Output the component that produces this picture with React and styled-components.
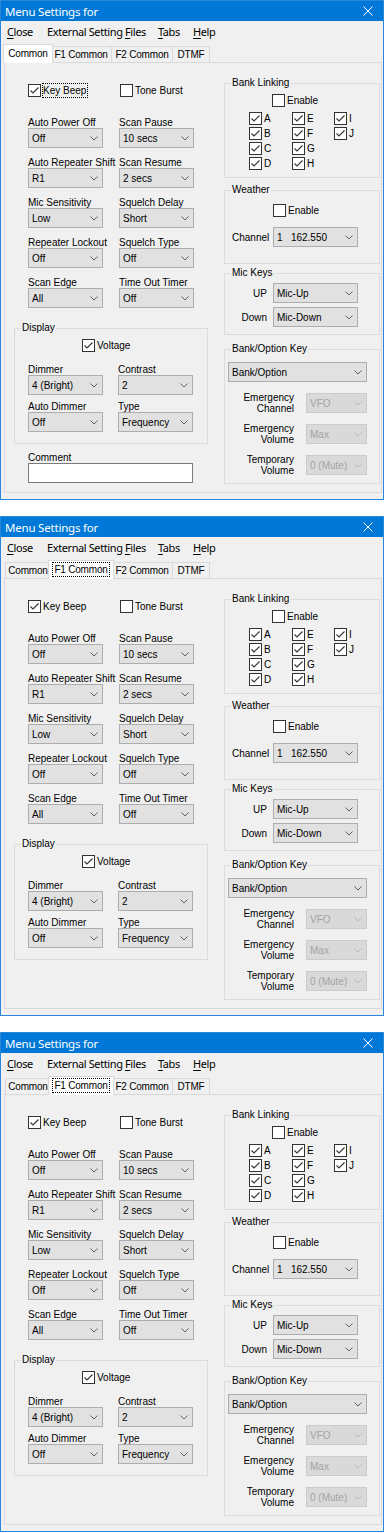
import React from 'react';
import styled, { createGlobalStyle } from 'styled-components';

const WIN_FONT = `"Liberation Sans", Arial, sans-serif`;
const UI_FONT = `"Noto Sans", "Liberation Sans", sans-serif`;

const GlobalStyle = createGlobalStyle`
  html, body { margin: 0; padding: 0; background: #ffffff; }
  body { width: 384px; }
  * { box-sizing: border-box; }
`;

const Stack = styled.div`
  display: flex;
  flex-direction: column;
  gap: 16px;
  width: 384px;
`;

const Frame = styled.div`
  width: 384px;
  height: 500px;
  background: #f0f0f0;
  border: 1px solid #2a87d9;
  display: flex;
  flex-direction: column;
  font-family: ${WIN_FONT};
  font-size: 10px;
  color: #000;
`;

const TitleBar = styled.div`
  height: 20px;
  flex: none;
  background: #0078d7;
  color: #fff;
  display: flex;
  align-items: center;
  justify-content: space-between;
  padding: 0 10px 0 4px;
  font-family: ${UI_FONT};
  font-size: 11.5px;
  letter-spacing: -0.2px;
`;

const MenuBar = styled.div`
  height: 21px;
  flex: none;
  display: flex;
  align-items: center;
  padding-left: 6px;
  font-family: ${UI_FONT};
  font-size: 11px;
  letter-spacing: -0.4px;
`;

const MenuItem = styled.span`
  width: ${(p) => p.$w}px;
  white-space: nowrap;
  line-height: 14px;
  u { text-decoration-thickness: 1px; text-underline-offset: 2px; }
`;

const TabStrip = styled.div`
  height: 20px;
  flex: none;
  display: flex;
  align-items: flex-end;
  padding-left: 4px;
  position: relative;
  z-index: 1;
  font-size: 10px;
  letter-spacing: -0.2px;
`;

const Tab = styled.div`
  width: ${(p) => (p.$selected ? p.$w + 4 : p.$w)}px;
  height: ${(p) => (p.$selected ? 19 : 16)}px;
  margin: 0 ${(p) => (p.$selected ? -2 : 0)}px ${(p) => (p.$selected ? -1 : 0)}px;
  margin-right: ${(p) => (p.$selected ? -3 : -1)}px;
  border: 1px solid #d9d9d9;
  border-bottom: none;
  background: ${(p) => (p.$selected ? '#ffffff' : '#f0f0f0')};
  position: relative;
  z-index: ${(p) => (p.$selected ? 2 : 1)};
  display: flex;
  align-items: ${(p) => (p.$selected ? 'flex-start' : 'center')};
  padding-top: ${(p) => (p.$selected ? 2 : 0)}px;
  justify-content: center;
  white-space: nowrap;
`;

const TabText = styled.span`
  line-height: 13px;
  padding: 0 1px;
  outline: ${(p) => (p.$focus ? '1px dotted #000' : 'none')};
  outline-offset: 0;
`;

const Page = styled.div`
  margin: 0 1px 0 3px;
  height: 431px;
  flex: none;
  border: 1px solid #d9d9d9;
  padding: 14px 1px 0 9px;
  display: grid;
  grid-template-columns: 194px 156px;
  column-gap: 16px;
  align-items: start;
`;

const LeftCol = styled.div`
  display: flex;
  flex-direction: column;
  padding-top: 7px;
`;

const RightCol = styled.div`
  display: flex;
  flex-direction: column;
`;

const ChecksRow = styled.div`
  display: grid;
  grid-template-columns: 92px 75px;
  padding-left: 14px;
  height: 13px;
`;

const FieldGrid = styled.div`
  display: grid;
  grid-template-columns: ${(p) => p.$w}px ${(p) => p.$w}px;
  column-gap: ${(p) => p.$gap}px;
  row-gap: ${(p) => p.$rowGap}px;
  margin-top: ${(p) => p.$mt}px;
  padding-left: ${(p) => p.$pl}px;
`;

const Field = styled.div`
  display: flex;
  flex-direction: column;
`;

const FieldLabel = styled.div`
  height: 11px;
  line-height: 11px;
  white-space: nowrap;
`;

const CheckLabel = styled.label`
  display: inline-flex;
  align-items: center;
  gap: 2px;
  height: 13px;
  white-space: nowrap;
`;

const CheckText = styled.span`
  line-height: 13px;
  padding: 0 1px 0 0;
  outline: ${(p) => (p.$focus ? '1px dotted #000' : 'none')};
  outline-offset: 0;
`;

const Box = styled.span`
  width: 13px;
  height: 13px;
  flex: none;
  border: 1px solid #333333;
  background: #ffffff;
  display: inline-flex;
  align-items: center;
  justify-content: center;
`;

const CheckBox = ({ label, checked, focus }) => (
  <CheckLabel>
    <Box>
      {checked && (
        <svg width="11" height="11" viewBox="0 0 11 11">
          <polyline points="1.5,5.5 4,8 9.5,2.5" fill="none" stroke="#333" strokeWidth="1.1" />
        </svg>
      )}
    </Box>
    <CheckText $focus={focus}>{label}</CheckText>
  </CheckLabel>
);

const ComboBox = styled.div`
  width: ${(p) => p.$w}px;
  height: 20px;
  flex: none;
  border: 1px solid ${(p) => (p.$disabled ? '#cbcbcb' : '#adadad')};
  background: ${(p) => (p.$disabled ? '#d9d9d9' : '#e1e1e1')};
  color: ${(p) => (p.$disabled ? '#a3a3a3' : '#000')};
  display: flex;
  align-items: center;
  justify-content: space-between;
  padding: 0 4px 0 3px;
  white-space: nowrap;
`;

const Combo = ({ value, w = 75, disabled }) => (
  <ComboBox $w={w} $disabled={disabled}>
    <span>{value}</span>
    <svg width="8" height="5" viewBox="0 0 8 5">
      <polyline
        points="0.5,0.5 4,4 7.5,0.5"
        fill="none"
        stroke={disabled ? '#b8b8b8' : '#606060'}
        strokeWidth="1"
      />
    </svg>
  </ComboBox>
);

const GroupWrap = styled.div`
  display: flex;
  flex-direction: column;
  margin-top: ${(p) => p.$mt || 0}px;
`;

const GroupHead = styled.div`
  height: 12px;
  display: flex;
  align-items: flex-end;
`;

const HeadSeg = styled.div`
  height: 6px;
  border-top: 1px solid #dcdcdc;
  border-left: ${(p) => (p.$first ? '1px solid #dcdcdc' : 'none')};
  border-right: ${(p) => (p.$last ? '1px solid #dcdcdc' : 'none')};
  width: ${(p) => (p.$first ? '7px' : 'auto')};
  flex: ${(p) => (p.$last ? '1' : 'none')};
`;

const Caption = styled.span`
  align-self: stretch;
  line-height: 12px;
  padding: 0 1px;
  white-space: nowrap;
`;

const GroupBody = styled.div`
  border: 1px solid #dcdcdc;
  border-top: none;
  padding: ${(p) => p.$pt}px 0 ${(p) => p.$pb}px;
  display: flex;
  flex-direction: column;
`;

const Group = ({ title, mt, pt, pb, children }) => (
  <GroupWrap $mt={mt}>
    <GroupHead>
      <HeadSeg $first />
      <Caption>{title}</Caption>
      <HeadSeg $last />
    </GroupHead>
    <GroupBody $pt={pt} $pb={pb}>
      {children}
    </GroupBody>
  </GroupWrap>
);

const Indent = styled.div`
  padding-left: ${(p) => p.$pl}px;
  margin-top: ${(p) => p.$mt || 0}px;
  display: flex;
`;

const LetterGrid = styled.div`
  display: grid;
  grid-template-columns: 43px 42px auto;
  grid-template-rows: repeat(4, 13px);
  grid-auto-flow: column;
  row-gap: 2px;
  padding-left: 24px;
  margin-top: 5px;
`;

const KeyRows = styled.div`
  display: grid;
  grid-template-columns: ${(p) => p.$lw}px ${(p) => p.$cw}px;
  column-gap: ${(p) => p.$gap}px;
  row-gap: ${(p) => p.$rowGap}px;
  margin-top: ${(p) => p.$mt || 0}px;
  padding-left: ${(p) => p.$pl || 0}px;
  align-items: center;
`;

const KeyLabel = styled.div`
  justify-self: ${(p) => (p.$left ? 'start' : 'end')};
  padding-left: ${(p) => (p.$left ? 7 : 0)}px;
  text-align: ${(p) => (p.$left ? 'left' : 'right')};
  line-height: 11px;
  white-space: nowrap;
`;

const CommentBlock = styled.div`
  margin-top: 8px;
  padding-left: 14px;
  display: flex;
  flex-direction: column;
`;

const TextBox = styled.div`
  width: 165px;
  height: 20px;
  background: #ffffff;
  border: 1px solid #7a7a7a;
`;

const leftFields = [
  ['Auto Power Off', 'Off'],
  ['Scan Pause', '10 secs'],
  ['Auto Repeater Shift', 'R1'],
  ['Scan Resume', '2 secs'],
  ['Mic Sensitivity', 'Low'],
  ['Squelch Delay', 'Short'],
  ['Repeater Lockout', 'Off'],
  ['Squelch Type', 'Off'],
  ['Scan Edge', 'All'],
  ['Time Out Timer', 'Off'],
];

const displayFields = [
  ['Dimmer', '4 (Bright)'],
  ['Contrast', '2'],
  ['Auto Dimmer', 'Off'],
  ['Type', 'Frequency'],
];

const tabs = [
  ['Common', 46],
  ['F1 Common', 62],
  ['F2 Common', 62],
  ['DTMF', 38],
];

const menus = [
  [<><u>C</u>lose</>, 40],
  [<>External Setting <u>F</u>iles</>, 111],
  [<><u>T</u>abs</>, 35],
  [<><u>H</u>elp</>, 40],
];

const CloseX = () => (
  <svg width="10" height="10" viewBox="0 0 10 10">
    <path d="M0.5 0.5 L9.5 9.5 M9.5 0.5 L0.5 9.5" stroke="#fff" strokeWidth="1" fill="none" />
  </svg>
);

const SettingsWindow = ({ selectedTab, focusKeyBeep, showComment }) => (
  <Frame>
    <TitleBar>
      <span>Menu Settings for</span>
      <CloseX />
    </TitleBar>
    <MenuBar>
      {menus.map(([label, w], i) => (
        <MenuItem key={i} $w={w}>
          {label}
        </MenuItem>
      ))}
    </MenuBar>
    <TabStrip>
      {tabs.map(([label, w], i) => (
        <Tab key={label} $w={w} $selected={i === selectedTab}>
          <TabText $focus={i === selectedTab && selectedTab !== 0}>{label}</TabText>
        </Tab>
      ))}
    </TabStrip>
    <Page>
      <LeftCol>
        <ChecksRow>
          <CheckBox label="Key Beep" checked focus={focusKeyBeep} />
          <CheckBox label="Tone Burst" />
        </ChecksRow>
        <FieldGrid $w={75} $gap={16} $rowGap={9} $mt={20} $pl={14}>
          {leftFields.map(([label, value]) => (
            <Field key={label}>
              <FieldLabel>{label}</FieldLabel>
              <Combo value={value} />
            </Field>
          ))}
        </FieldGrid>
        <Group title="Display" mt={14} pt={5} pb={11}>
          <Indent $pl={67}>
            <CheckBox label="Voltage" checked />
          </Indent>
          <FieldGrid $w={75} $gap={15} $rowGap={6} $mt={12} $pl={13}>
            {displayFields.map(([label, value]) => (
              <Field key={label}>
                <FieldLabel>{label}</FieldLabel>
                <Combo value={value} />
              </Field>
            ))}
          </FieldGrid>
        </Group>
        {showComment && (
          <CommentBlock>
            <FieldLabel>Comment</FieldLabel>
            <TextBox />
          </CommentBlock>
        )}
      </LeftCol>
      <RightCol>
        <Group title="Bank Linking" pt={5} pb={7}>
          <Indent $pl={47}>
            <CheckBox label="Enable" />
          </Indent>
          <LetterGrid>
            {['A', 'B', 'C', 'D', 'E', 'F', 'G', 'H', 'I', 'J'].map((l) => (
              <CheckBox key={l} label={l} checked />
            ))}
          </LetterGrid>
        </Group>
        <Group title="Weather" mt={6} pt={8} pb={16}>
          <Indent $pl={48}>
            <CheckBox label="Enable" />
          </Indent>
          <KeyRows $lw={42} $cw={85} $gap={6} $rowGap={4} $mt={10}>
            <KeyLabel $left>Channel</KeyLabel>
            <Combo value={<>1&nbsp;&nbsp;&nbsp;162.550</>} w={85} />
          </KeyRows>
        </Group>
        <Group title="Mic Keys" mt={3} pt={4} pb={7}>
          <KeyRows $lw={42} $cw={85} $gap={6} $rowGap={4}>
            <KeyLabel>UP</KeyLabel>
            <Combo value="Mic-Up" w={85} />
            <KeyLabel>Down</KeyLabel>
            <Combo value="Mic-Down" w={85} />
          </KeyRows>
        </Group>
        <Group title="Bank/Option Key" mt={8} pt={7} pb={7}>
          <Indent $pl={3}>
            <Combo value="Bank/Option" w={139} />
          </Indent>
          <KeyRows $lw={69} $cw={61} $gap={12} $rowGap={9} $mt={10}>
            <KeyLabel>
              Emergency
              <br />
              Channel
            </KeyLabel>
            <Combo value="VFO" w={61} disabled />
            <KeyLabel>
              Emergency
              <br />
              Volume
            </KeyLabel>
            <Combo value="Max" w={61} disabled />
            <KeyLabel>
              Temporary
              <br />
              Volume
            </KeyLabel>
            <Combo value="0 (Mute)" w={61} disabled />
          </KeyRows>
        </Group>
      </RightCol>
    </Page>
  </Frame>
);

export default function App() {
  return (
    <>
      <GlobalStyle />
      <Stack>
        <SettingsWindow selectedTab={0} focusKeyBeep showComment />
        <SettingsWindow selectedTab={1} />
        <SettingsWindow selectedTab={1} />
      </Stack>
    </>
  );
}
